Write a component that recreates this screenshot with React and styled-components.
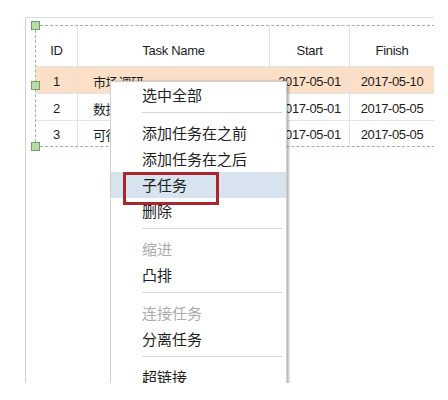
import React from 'react';
import styled, {createGlobalStyle} from 'styled-components';

const GlobalStyle = createGlobalStyle`
  html, body {
    margin: 0;
    background: #ffffff;
  }
  body {
    font-family: "Liberation Sans", Arial, "Noto Sans CJK SC", sans-serif;
    color: #1c1c1c;
  }
`;

const Page = styled.div`
  width: 448px;
  height: 400px;
  padding: 17px 14px 0 25px;
  box-sizing: border-box;
  background: #ffffff;
`;

const Sheet = styled.div`
  position: relative;
  height: 366px;
  overflow: hidden;
  border-top: 1px solid #dcdcdc;
  border-left: 1px solid #d0d0d0;
  padding: 7px 0 0 9px;
  box-sizing: border-box;
`;

const Selection = styled.div`
  position: relative;
  width: 399px;
  border-top: 1px dashed #86c086;
  border-bottom: 1px dashed #86c086;
  border-left: 1px dashed #86c086;
`;

const Handle = styled.span`
  position: absolute;
  left: -5px;
  top: ${p => p.$top};
  width: 7px;
  height: 7px;
  background: #b9dcaa;
  border: 1px solid #6f9f60;
  z-index: 2;
`;

const Grid = styled.div`
  display: grid;
  grid-template-columns: 42px 192px 80px 84px;
`;

const Row = styled.div`
  display: contents;
`;

const Cell = styled.div`
  height: ${p => p.$h}px;
  display: flex;
  align-items: center;
  justify-content: ${p => (p.$left ? 'flex-start' : 'center')};
  padding-left: ${p => (p.$left ? '15px' : '0')};
  padding-top: ${p => (p.$head ? '9px' : '2px')};
  box-sizing: border-box;
  background: ${p => (p.$active ? '#fcdfc7' : 'transparent')};
  border-right: ${p => (p.$last ? 'none' : '1px solid #e2e2e2')};
  border-bottom: ${p => (p.$end ? 'none' : '1px solid #e4e4e4')};
  font-size: 13px;
  letter-spacing: ${p => (p.$head ? '-0.3px' : '-0.4px')};
  white-space: nowrap;
  overflow: hidden;
`;

const Menu = styled.div`
  position: absolute;
  left: 84px;
  top: 63px;
  width: 175px;
  height: 340px;
  background: #ffffff;
  border: 1px solid #cfcfcf;
  box-shadow: 2px 0 2px rgba(0, 0, 0, 0.28);
  font-family: "Noto Sans CJK SC", "Liberation Sans", sans-serif;
  z-index: 3;
`;

const Item = styled.div`
  height: 26px;
  line-height: 26px;
  padding-left: 31px;
  font-size: 15px;
  color: ${p => (p.$disabled ? '#ababab' : '#1e1e1e')};
  background: ${p => (p.$hover ? '#d8e3f0' : 'transparent')};
`;

const Separator = styled.div`
  height: 1px;
  margin: 4px 4px 7px 31px;
  background: #d6d6d6;
`;

const Marker = styled.div`
  position: absolute;
  left: 12px;
  top: 90px;
  width: 96px;
  height: 33px;
  border: 3px solid #a9262e;
  box-sizing: border-box;
`;

const columns = ['ID', 'Task Name', 'Start', 'Finish'];

const tasks = [
    {id: 1, name: '市场调研', start: '2017-05-01', finish: '2017-05-10', h: 27},
    {id: 2, name: '数据收集', start: '2017-05-01', finish: '2017-05-05', h: 27},
    {id: 3, name: '可行性分析', start: '2017-05-01', finish: '2017-05-05', h: 25},
];

const menu = [
    {label: '选中全部'},
    'sep',
    {label: '添加任务在之前'},
    {label: '添加任务在之后'},
    {label: '子任务', hover: true},
    {label: '删除'},
    'sep',
    {label: '缩进', disabled: true},
    {label: '凸排'},
    'sep',
    {label: '连接任务', disabled: true},
    {label: '分离任务'},
    'sep',
    {label: '超链接'},
];

const App = () => {
    return (
        <Page>
            <GlobalStyle />
            <Sheet>
                <Selection>
                    <Handle $top="-5px" />
                    <Handle $top="calc(50% - 5px)" />
                    <Handle $top="calc(100% - 4px)" />
                    <Grid>
                        <Row>
                            {columns.map((c, i) => (
                                <Cell key={c} $h={41} $head $last={i === 3}>{c}</Cell>
                            ))}
                        </Row>
                        {tasks.map((t, r) => {
                            const end = r === tasks.length - 1;
                            const active = r === 0;
                            return (
                                <Row key={t.id}>
                                    <Cell $h={t.h} $end={end} $active={active}>{t.id}</Cell>
                                    <Cell $h={t.h} $end={end} $active={active} $left>{t.name}</Cell>
                                    <Cell $h={t.h} $end={end} $active={active}>{t.start}</Cell>
                                    <Cell $h={t.h} $end={end} $active={active} $last>{t.finish}</Cell>
                                </Row>
                            );
                        })}
                    </Grid>
                </Selection>

                <Menu>
                    {menu.map((m, i) =>
                        m === 'sep' ?
                            <Separator key={i} /> :
                            <Item key={i} $hover={m.hover} $disabled={m.disabled}>{m.label}</Item>
                    )}
                    <Marker />
                </Menu>
            </Sheet>
        </Page>
    );
};

export default App;
